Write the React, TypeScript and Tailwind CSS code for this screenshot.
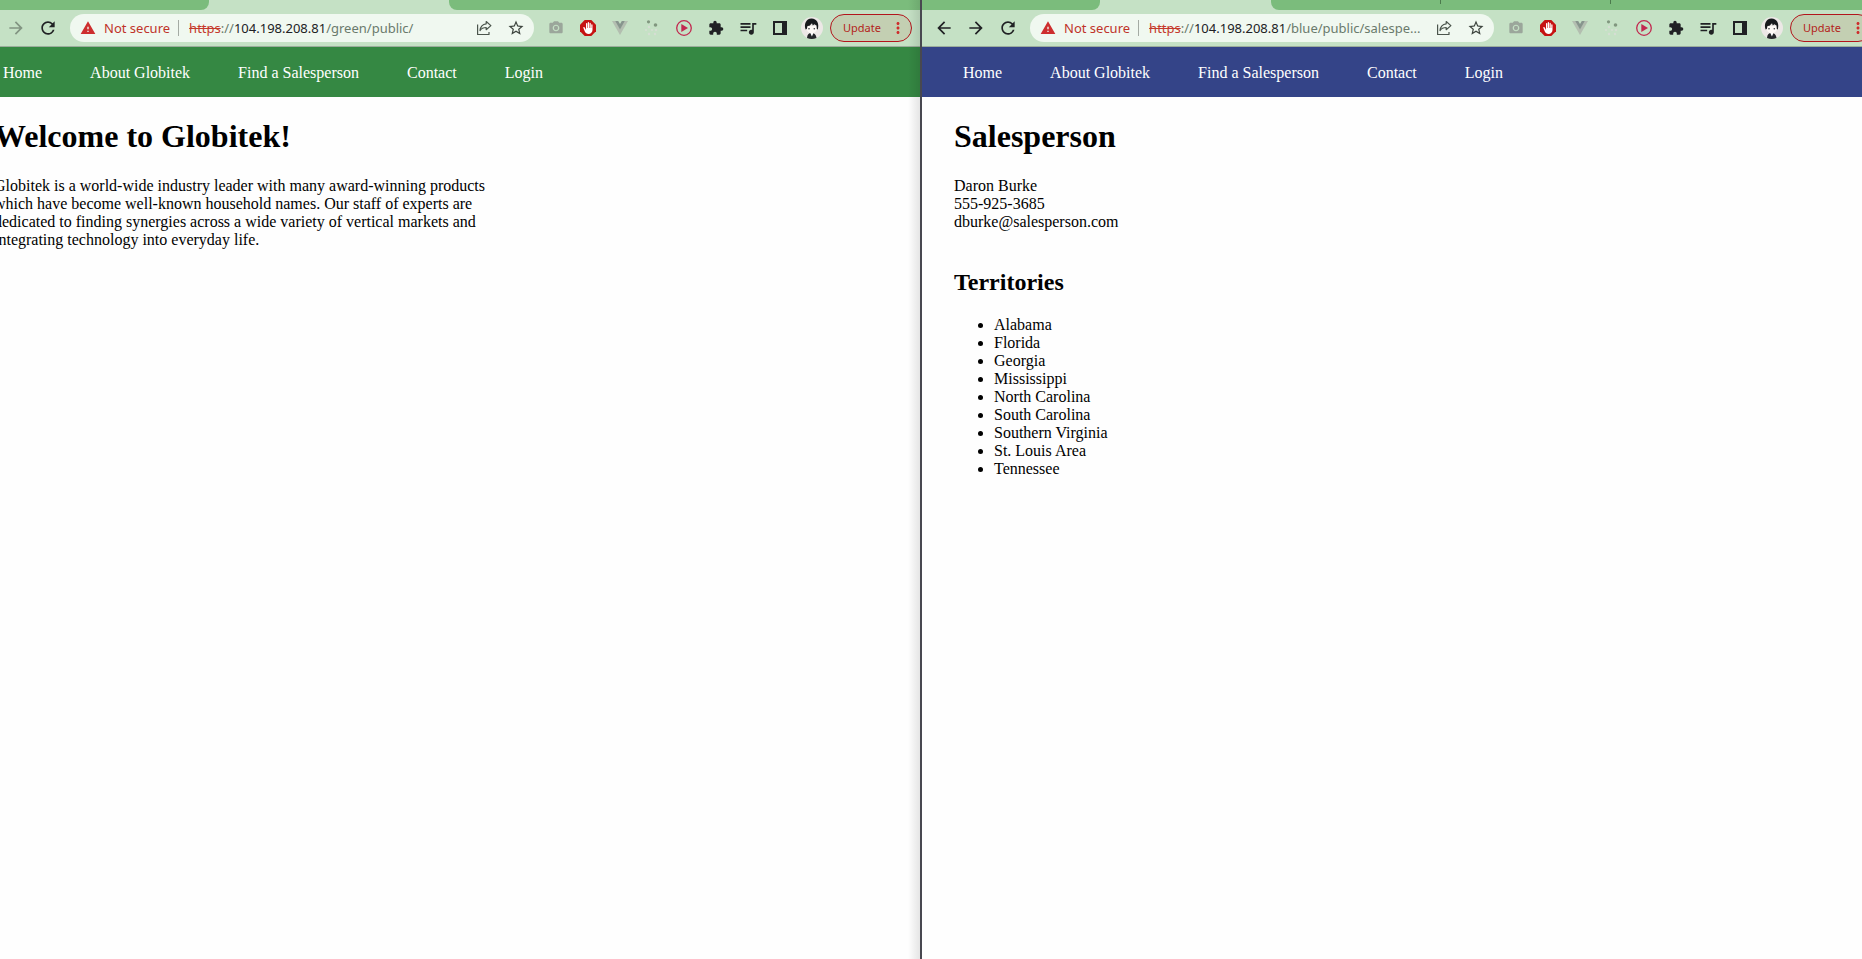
import { useState, type ReactNode } from "react";
import {
  MdArrowBack,
  MdArrowForward,
  MdBackHand,
  MdExtension,
  MdMoreVert,
  MdPhotoCamera,
  MdQueueMusic,
  MdRefresh,
  MdStarBorder,
  MdWarning,
} from "react-icons/md";

function ShareIcon() {
  return (
    <svg viewBox="0 0 16 16" className="size-4" fill="none" stroke="#4b554c" strokeWidth="1.2" strokeLinejoin="round">
      <path d="M1.600 4.500v10h11.400V12" />
      <path d="M10.200 1.500 14.900 5.600 10.200 9.700V7.500C7.200 7.500 5.400 8.400 4 10.600 4.400 7 6.400 4.200 10.200 3.800Z" />
    </svg>
  );
}

function StopHandIcon() {
  return (
    <span className="relative grid size-4 place-items-center">
      <svg viewBox="0 0 16 16" className="size-4">
        <path d="M4.700 0h6.600L16 4.700v6.600L11.300 16H4.700L0 11.300V4.700Z" fill="#c61212" />
      </svg>
      <MdBackHand className="absolute size-3 text-white" />
    </span>
  );
}

function VueIcon() {
  return (
    <svg viewBox="0 0 16 14" className="h-3.5 w-4">
      <path d="M0 0h3.400L8 8l4.600-8H16L8 14Z" fill="#b3beb0" />
      <path d="M3.200 0h3L8 3l1.800-3h3L8 8.400Z" fill="#87958d" />
    </svg>
  );
}

function DotsIcon() {
  return (
    <svg viewBox="0 0 16 16" className="size-4">
      <circle cx="4.500" cy="1.800" r="1.600" fill="#81977f" />
      <circle cx="11.500" cy="5" r="1.800" fill="#81977f" />
      <g fill="#d6ded3">
        <circle cx="5" cy="7" r="1.200" />
        <circle cx="2" cy="10" r="1" />
        <circle cx="8" cy="10" r="1" />
        <circle cx="12" cy="10" r="1.200" />
        <circle cx="5" cy="14" r="1.200" />
        <circle cx="11" cy="14" r="1.200" />
      </g>
    </svg>
  );
}

function PlayIcon() {
  return (
    <svg viewBox="0 0 16 16" className="size-4">
      <circle cx="8" cy="8" r="7.300" fill="none" stroke="#c2284f" strokeWidth="1.300" />
      <path d="M5.300 4 12 8 5.300 12Z" fill="#c2284f" />
    </svg>
  );
}

function PanelIcon() {
  return (
    <svg viewBox="0 0 14 14" className="size-3.5">
      <path d="M0 0h14v14H0ZM2 2v10h7V2Z" fill="#202124" fillRule="evenodd" />
    </svg>
  );
}

function Avatar() {
  return (
    <svg viewBox="0 0 22 22" className="size-[22px]">
      <circle cx="11" cy="11" r="11" fill="#ece8e6" />
      <path d="M6 21c.300-3.500 1.500-5 4.500-5s4.500 1.500 5 5c-2.800 1.200-6.500 1.300-9.500 0Z" fill="#25272b" />
      <path d="M9.300 16h3.200l-1.600 3.500Z" fill="#fff" />
      <path d="M5.500 9h10.500c.500 4.500-1.500 7.200-5.200 7.200S5 13.500 5.500 9Z" fill="#fdf9f6" />
      <path
        d="M4.600 12.500C2.800 7.500 4.800 1.500 10.500 1.500c5.500 0 8 5 6.300 11l-1-.5-.3-3.500-2.200-1.200-1.500 1.200-.8-2.300-2.500 2.600-2 .3-.7 3Z"
        fill="#17191c"
      />
      <circle cx="8" cy="11.800" r=".8" fill="#33363a" />
      <circle cx="13.300" cy="11.800" r=".8" fill="#33363a" />
    </svg>
  );
}

function ToolButton({ label, children }: { label: string; children: ReactNode }) {
  return (
    <button type="button" aria-label={label} className="grid h-7 w-8 shrink-0 place-items-center">
      {children}
    </button>
  );
}

function AddressBar({ host, path }: { host: string; path: string }) {
  const [editing, setEditing] = useState(false);
  const url = "https://" + host + path;
  return (
    <div className="mx-1.5 flex h-7 min-w-0 flex-1 items-center rounded-full bg-[#f0f8f0] pl-2.5 text-[13px] leading-5">
      <MdWarning className="size-4 shrink-0 text-[#cd2e2e]" />
      <span className="ml-2 shrink-0 text-[#bf3329]">Not secure</span>
      <span className="mr-2.5 ml-2 h-4 w-px shrink-0 bg-[#a4aba4]" />
      <div className="relative min-w-0 flex-1">
        {!editing && (
          <p className="whitespace-nowrap text-[#6a7a6c]">
            <span className="text-[#c5392c] line-through">https</span>://<span className="text-[#202124]">{host}</span>
            {path}
          </p>
        )}
        <input
          aria-label="Address"
          className={editing ? "w-full bg-transparent outline-none" : "absolute inset-0 w-full bg-transparent"}
          value={editing ? url : ""}
          readOnly
          onFocus={() => setEditing(true)}
          onBlur={() => setEditing(false)}
        />
      </div>
      <ToolButton label="Share">
        <ShareIcon />
      </ToolButton>
      <ToolButton label="Bookmark">
        <MdStarBorder className="size-[18px] text-[#3c433d]" />
      </ToolButton>
      <span className="w-0.5 shrink-0" />
    </div>
  );
}

type ToolbarProps = { host: string; path: string; canForward: boolean };

function Toolbar({ host, path, canForward }: ToolbarProps) {
  return (
    <div className="flex h-[37px] items-center border-b border-[#9cad9c] bg-[#c5e1c5] pr-2.5 pl-1.5 font-['Noto_Sans',sans-serif] text-[#202124]">
      <ToolButton label="Back">
        <MdArrowBack className="size-5" />
      </ToolButton>
      <ToolButton label="Forward">
        <MdArrowForward className={canForward ? "size-5" : "size-5 text-[#829482]"} />
      </ToolButton>
      <ToolButton label="Reload">
        <MdRefresh className="size-5" />
      </ToolButton>
      <AddressBar host={host} path={path} />
      <ToolButton label="Screenshot">
        <MdPhotoCamera className="size-4 text-[#9ba69b]" />
      </ToolButton>
      <ToolButton label="Ad blocker">
        <StopHandIcon />
      </ToolButton>
      <ToolButton label="Vue devtools">
        <VueIcon />
      </ToolButton>
      <ToolButton label="Graph">
        <DotsIcon />
      </ToolButton>
      <ToolButton label="Player">
        <PlayIcon />
      </ToolButton>
      <ToolButton label="Extensions">
        <MdExtension className="size-4" />
      </ToolButton>
      <ToolButton label="Media">
        <MdQueueMusic className="size-5" />
      </ToolButton>
      <ToolButton label="Side panel">
        <PanelIcon />
      </ToolButton>
      <ToolButton label="Profile">
        <Avatar />
      </ToolButton>
      <button
        type="button"
        className="ml-0.5 flex h-7 w-[82px] shrink-0 items-center justify-between rounded-full border border-[#b3141c] bg-[#c3cfb2] pr-1 pl-3 text-[11px] text-[#b3231b]"
      >
        Update
        <MdMoreVert className="size-[18px] text-[#cf2b2b]" />
      </button>
    </div>
  );
}

const NAV = ["Home", "About Globitek", "Find a Salesperson", "Contact", "Login"];

function SiteNav({ color }: { color: string }) {
  return (
    <nav className={"flex h-[50px] items-center gap-12 pt-0.5 pl-[41px] text-white " + color}>
      {NAV.map((item) => (
        <a key={item} href="#" className="whitespace-nowrap">
          {item}
        </a>
      ))}
    </nav>
  );
}

const TERRITORIES = [
  "Alabama",
  "Florida",
  "Georgia",
  "Mississippi",
  "North Carolina",
  "South Carolina",
  "Southern Virginia",
  "St. Louis Area",
  "Tennessee",
];

export default function App() {
  return (
    <div className="grid min-h-screen grid-cols-[920fr_942fr] overflow-hidden bg-[#fefefe] font-['Liberation_Serif',serif] text-base leading-[18px] text-black">
      <section className="relative min-w-0 overflow-hidden">
        <div className="-ml-[38px] w-[calc(100%+40px)]">
          <div className="flex h-2.5 justify-between bg-[#c5e1c5]">
            <div className="w-[247px] rounded-br-lg bg-[#7bbc7c]" />
            <div className="w-[473px] rounded-bl-lg bg-[#7bbc7c]" />
          </div>
          <Toolbar host="104.198.208.81" path="/green/public/" canForward={false} />
          <SiteNav color="bg-[#358843]" />
          <main className="px-8">
            <h1 className="mt-[21px] mb-[22px] text-[32px] leading-[37px] font-bold">Welcome to Globitek!</h1>
            <p className="max-w-[500px]">
              Globitek is a world-wide industry leader with many award-winning products which have become well-known
              household names. Our staff of experts are dedicated to finding synergies across a wide variety of vertical
              markets and integrating technology into everyday life.
            </p>
          </main>
        </div>
        <div className="pointer-events-none absolute inset-y-0 right-0 w-3 bg-linear-to-r from-transparent to-black/10" />
      </section>

      <section className="min-w-0 overflow-hidden border-l-2 border-[#484850]">
        <div className="w-[calc(100%+20px)]">
          <div className="flex h-2.5 justify-between bg-[#c5e1c5]">
            <div className="w-[178px] rounded-br-lg bg-[#7bbc7c]" />
            <div className="flex w-[611px] rounded-bl-lg bg-[#7bbc7c] pl-[169px]">
              <span className="h-1 w-px bg-[#4c7a4d]" />
              <span className="ml-[169px] h-1 w-px bg-[#4c7a4d]" />
            </div>
          </div>
          <Toolbar host="104.198.208.81" path="/blue/public/salespe..." canForward />
          <SiteNav color="bg-[#344488]" />
          <main className="px-8">
            <h1 className="mt-[21px] mb-[22px] text-[32px] leading-[37px] font-bold">Salesperson</h1>
            <address className="not-italic">
              Daron Burke
              <br />
              555-925-3685
              <br />
              dburke@salesperson.com
            </address>
            <h2 className="mt-[38px] mb-5 text-2xl leading-[27px] font-bold">Territories</h2>
            <ul className="list-disc pl-10">
              {TERRITORIES.map((name) => (
                <li key={name}>{name}</li>
              ))}
            </ul>
          </main>
        </div>
      </section>
    </div>
  );
}
